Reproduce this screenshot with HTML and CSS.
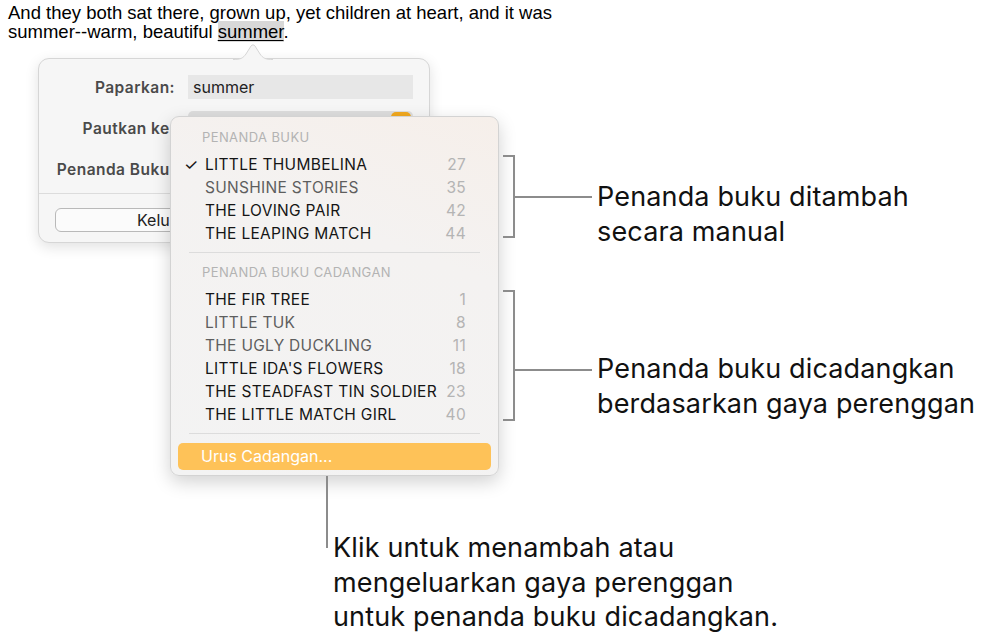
FILE: index.html
```html
<!DOCTYPE html>
<html lang="ms">
<head>
    <meta charset="UTF-8">
    <meta name="viewport" content="width=device-width, initial-scale=1.0">
    <title>Penanda Buku</title>
    <link rel="stylesheet" href="styles.css">
</head>
<body>
<div class="stage">
    <p class="story">And they both sat there, grown up, yet children at heart, and it was<br>summer--warm, beautiful <span class="picked">summer</span>.</p>

    <div class="popover">
        <svg class="popover-tip" width="40" height="17" viewBox="0 0 40 17">
            <path d="M0 16.5 C8 16.5 10 15 13 11 L18 3 C19 1.5 21 1.5 22 3 L27 11 C30 15 32 16.5 40 16.5" fill="#f6f6f6" stroke="#d6d6d6" stroke-width="1"/>
        </svg>
        <div class="form-row first">
            <span class="label">Paparkan:</span>
            <span class="field">summer</span>
        </div>
        <div class="form-row second">
            <span class="label">Pautkan ke:</span>
            <span class="popup"><span class="popup-arrows"></span></span>
        </div>
        <div class="form-row third">
            <span class="label">Penanda Buku:</span>
            <span></span>
        </div>
        <div class="popover-foot">
            <button class="plain-btn">Keluarkan</button>
        </div>
    </div>

    <div class="menu">
        <div class="menu-head">PENANDA BUKU</div>
        <ul class="menu-list">
            <li class="on"><span class="check">✓</span><span>LITTLE THUMBELINA</span><span class="num">27</span></li>
            <li class="dim"><span>SUNSHINE STORIES</span><span class="num">35</span></li>
            <li><span>THE LOVING PAIR</span><span class="num">42</span></li>
            <li><span>THE LEAPING MATCH</span><span class="num">44</span></li>
        </ul>
        <div class="menu-sep"></div>
        <div class="menu-head">PENANDA BUKU CADANGAN</div>
        <ul class="menu-list">
            <li><span>THE FIR TREE</span><span class="num">1</span></li>
            <li class="dim"><span>LITTLE TUK</span><span class="num">8</span></li>
            <li class="dim"><span>THE UGLY DUCKLING</span><span class="num">11</span></li>
            <li><span>LITTLE IDA'S FLOWERS</span><span class="num">18</span></li>
            <li><span>THE STEADFAST TIN SOLDIER</span><span class="num">23</span></li>
            <li><span>THE LITTLE MATCH GIRL</span><span class="num">40</span></li>
        </ul>
        <div class="menu-sep"></div>
        <div class="menu-action">Urus Cadangan...</div>
    </div>

    <!-- callouts -->
    <div class="bracket manual"></div>
    <div class="note manual-note">Penanda buku ditambah<br>secara manual</div>

    <div class="bracket auto"></div>
    <div class="note auto-note">Penanda buku dicadangkan<br>berdasarkan gaya perenggan</div>

    <div class="leader"></div>
    <div class="note manage-note">Klik untuk menambah atau<br>mengeluarkan gaya perenggan<br>untuk penanda buku dicadangkan.</div>
</div>
</body>
</html>
```

FILE: styles.css
```css
body {
    margin: 0;
    background: #fff;
    color: #000;
    font-family: 'Liberation Sans', Arial, sans-serif;
}
.stage {
    position: relative;
    width: 985px;
    height: 641px;
    overflow: hidden;
}
.story {
    margin: 0;
    padding: 3px 0 0 8px;
    font-size: 18.5px;
    line-height: 19px;
}
.picked {
    background: #d8d8d8;
    text-decoration: underline;
    text-underline-offset: 2px;
}

/* popover */
.popover {
    position: absolute;
    left: 38px;
    top: 58px;
    width: 392px;
    height: 185px;
    box-sizing: border-box;
    padding-top: 16px;
    background: #f6f6f6;
    border: 1px solid #d6d6d6;
    border-radius: 11px;
    box-shadow: 0 4px 14px rgba(0, 0, 0, 0.12);
    font-family: 'Inter', 'Noto Sans', sans-serif;
}
.popover-tip {
    position: absolute;
    left: 194px;
    top: -16px;
    display: block;
}
.form-row {
    display: grid;
    grid-template-columns: 136px 225px;
    column-gap: 13px;
    align-items: center;
}
.form-row.first {
    height: 24px;
}
.form-row.second {
    margin-top: 12px;
    height: 36px;
    align-items: start;
}
.form-row.second .label {
    margin-top: 8px;
}
.form-row.third {
    margin-top: 10px;
    height: 24px;
}
.label {
    text-align: right;
    font-size: 15.5px;
    font-weight: 600;
    color: #4a4a4a;
    white-space: nowrap;
    letter-spacing: 0.45px;
}
.field {
    height: 24px;
    line-height: 24px;
    padding-left: 5px;
    background: #e7e7e7;
    font-size: 16px;
    color: #222;
}
.popup {
    display: flex;
    justify-content: flex-end;
    height: 22px;
    padding-right: 2px;
    background: #dedede;
    border-radius: 5px;
}
.popup-arrows {
    width: 20px;
    height: 20px;
    margin-top: 1px;
    background: #f2a91f;
    border-radius: 5px;
}
.popover-foot {
    margin-top: 12px;
    padding: 14px 0 0 16px;
    border-top: 1px solid #dcdcdc;
}
.plain-btn {
    display: block;
    width: 330px;
    height: 24px;
    background: #fbfbfb;
    border: 1px solid #b9b9b9;
    border-radius: 6px;
    font-family: inherit;
    font-size: 16px;
    color: #222;
    padding-left: 81px;
    text-align: left;
    white-space: nowrap;
}

/* bookmark menu */
.menu {
    position: absolute;
    left: 170px;
    top: 116px;
    width: 329px;
    height: 360px;
    box-sizing: border-box;
    padding: 10px 7px 7px;
    background: linear-gradient(200deg, #f6efea 0%, #f4f2f1 35%, #f3f3f3 100%);
    border: 1px solid #d3d3d3;
    border-radius: 9px;
    box-shadow: 0 6px 18px rgba(0, 0, 0, 0.18);
    font-family: 'Inter', 'Noto Sans', sans-serif;
}
.menu-head {
    height: 20px;
    line-height: 20px;
    padding-left: 24px;
    font-size: 13px;
    letter-spacing: 0.4px;
    color: #b3b3b3;
}
.menu-list {
    list-style: none;
    margin: 6px 0 0;
    padding: 0;
}
.menu-list li {
    position: relative;
    display: flex;
    justify-content: space-between;
    height: 23px;
    line-height: 23px;
    padding: 0 25px 0 27px;
    font-size: 15.5px;
    color: #151515;
    letter-spacing: 0.3px;
}
.menu-list li.dim {
    color: #5e5e5e;
}
.menu-list .num {
    color: #b4b4b4;
}
.check {
    position: absolute;
    left: 6px;
    font-size: 16px;
}
.menu-sep {
    height: 1px;
    margin: 7px 11px 9px;
    background: #dcdcdc;
}
.menu-list + .menu-sep {
    margin-top: 7px;
}
.menu-sep:last-of-type {
    margin-bottom: 7px;
}
.menu-action {
    height: 27px;
    line-height: 27px;
    padding-left: 23px;
    background: #fec258;
    border-radius: 5px;
    color: #fff;
    font-size: 16px;
}

/* callouts */
.bracket {
    position: absolute;
    left: 503px;
    width: 10px;
    border: 2px solid #8c8c8c;
    border-left: none;
}
.bracket::after {
    content: "";
    position: absolute;
    left: 10px;
    width: 79px;
    height: 2px;
    background: #8c8c8c;
    top: calc(50% - 1px);
}
.bracket.manual {
    top: 155px;
    height: 79px;
}
.bracket.auto {
    top: 290px;
    height: 127px;
}
.bracket.auto::after {
    top: 77px;
}
.note {
    position: absolute;
    font-family: 'Inter', 'Noto Sans', sans-serif;
    font-size: 27px;
    line-height: 34.5px;
    color: #111;
    white-space: nowrap;
    letter-spacing: 0.15px;
}
.manual-note {
    left: 597px;
    top: 180px;
}
.auto-note {
    left: 597px;
    top: 352px;
}
.leader {
    position: absolute;
    left: 326px;
    top: 476px;
    width: 2px;
    height: 72px;
    background: #8c8c8c;
}
.manage-note {
    left: 333px;
    top: 531px;
}
```
